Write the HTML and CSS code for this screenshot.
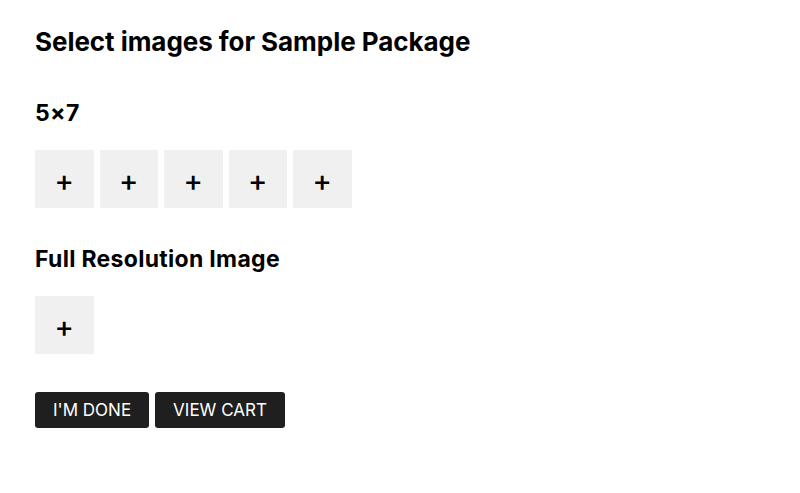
FILE: index.html
```html
<!DOCTYPE html>
<html>
<head>
<meta charset="utf-8">
<link rel="stylesheet" href="styles.css">
</head>
<body>
<main class="page">
  <h1 class="title">Select images for Sample Package</h1>
  <section class="group">
    <h2 class="group-title">5×7</h2>
    <div class="slots">
      <div class="slot">+</div>
      <div class="slot">+</div>
      <div class="slot">+</div>
      <div class="slot">+</div>
      <div class="slot">+</div>
    </div>
  </section>
  <section class="group">
    <h2 class="group-title">Full Resolution Image</h2>
    <div class="slots">
      <div class="slot">+</div>
    </div>
  </section>
  <div class="actions">
    <button class="btn">I'M DONE</button>
    <button class="btn">VIEW CART</button>
  </div>
</main>
</body>
</html>
```
FILE: styles.css
```css
html, body {
  margin: 0;
  padding: 0;
  background: #fff;
}
body {
  font-family: Inter, "Noto Sans", sans-serif;
  color: #000;
}
.page {
  padding: 26px 35px;
}
.title {
  margin: 0;
  font-size: 26px;
  line-height: 32px;
  font-weight: 700;
  letter-spacing: -0.05px;
}
.group {
  margin-top: 41px;
}
.group + .group {
  margin-top: 37px;
}
.group-title {
  margin: 0;
  font-size: 23px;
  line-height: 28px;
  font-weight: 700;
  letter-spacing: 0.3px;
}
.slots {
  display: flex;
  gap: 6px;
  margin-top: 23px;
}
.slot {
  width: 58.5px;
  height: 58px;
  background: #f0f0f0;
  display: flex;
  align-items: center;
  justify-content: center;
  font-size: 29px;
  font-weight: 500;
  padding-top: 2px;
  box-sizing: border-box;
}
.actions {
  display: flex;
  gap: 6px;
  margin-top: 38px;
}
.btn {
  font-family: Inter, "Noto Sans", sans-serif;
  font-size: 17px;
  color: #fff;
  background: #1f1f1f;
  border: none;
  border-radius: 3px;
  height: 36px;
  padding: 0 18px;
}
```
